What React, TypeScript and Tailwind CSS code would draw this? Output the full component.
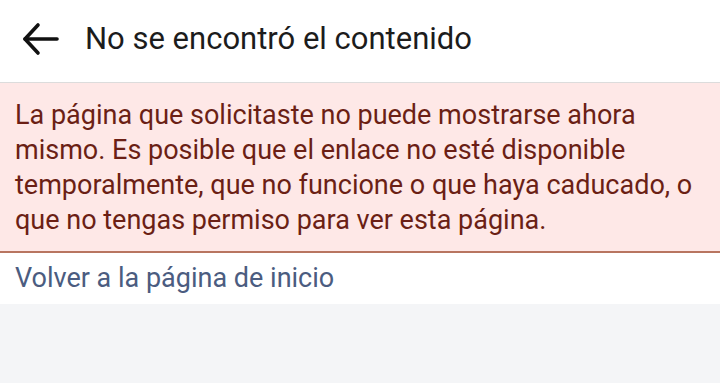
import React from 'react';

const ArrowLeft: React.FC = () => (
  <svg width="38" height="34" viewBox="0 0 38 34" fill="none" stroke="#111" strokeWidth="3.6" strokeLinecap="round" strokeLinejoin="round">
    <path d="M35 17H3" />
    <path d="M16 3L3 17l13 14" />
  </svg>
);

export default function App() {
  return (
    <div className="min-h-screen bg-[#f4f5f7]" style={{ fontFamily: 'Roboto, "Noto Sans", sans-serif' }}>
      {/* HEADER */}
      <div className="h-[83px] flex items-center pb-[5px] bg-white border-b border-[#dcdcdc]">
        <div className="pl-[22px] pr-[25px] flex items-center">
          <ArrowLeft />
        </div>
        <h1 className="text-[31px] text-[#1c1c1c] leading-none">No se encontró el contenido</h1>
      </div>

      {/* ALERT */}
      <div className="bg-[#fee8e7] border-b-2 border-[#b87560] px-[15px] pt-[15px] pb-[13px]">
        <p className="text-[27px] leading-[35px] text-[#6b1f15]">
          La página que solicitaste no puede mostrarse ahora mismo. Es posible que el enlace no esté disponible temporalmente, que no funcione o que haya caducado, o que no tengas permiso para ver esta página.
        </p>
      </div>

      {/* LINK */}
      <div className="bg-white h-[51px] flex items-center px-[15px]">
        <a className="text-[27px] text-[#4b5c80]">Volver a la página de inicio</a>
      </div>
    </div>
  );
}
